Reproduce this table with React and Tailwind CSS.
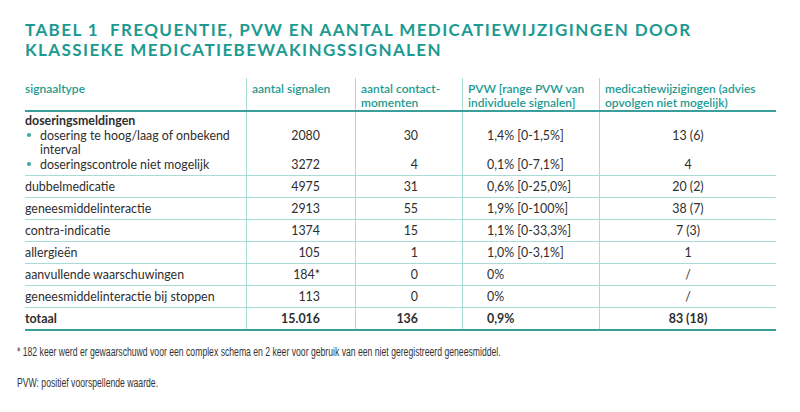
import React from "react";

const cols = "grid grid-cols-[221px_109px_107px_137px_177px]";

const rows = [
  ["dubbelmedicatie", "4975", "31", "0,6% [0-25,0%]", "20 (2)"],
  ["geneesmiddelinteractie", "2913", "55", "1,9% [0-100%]", "38 (7)"],
  ["contra-indicatie", "1374", "15", "1,1% [0-33,3%]", "7 (3)"],
  ["allergieën", "105", "1", "1,0% [0-3,1%]", "1"],
  ["aanvullende waarschuwingen", "184*", "0", "0%", "/"],
  ["geneesmiddelinteractie bij stoppen", "113", "0", "0%", "/"],
];

const Bullet = () => (
  <span className="inline-block w-[4px] h-[4px] rounded-full bg-[#3aa9a2] ml-[2px] mr-[9px] mb-[2px] align-middle" />
);

export default function App() {
  return (
    <div className="w-[800px] h-[412px] bg-white text-[#2e2e2e] font-['Lato',sans-serif] overflow-hidden">
      {/* Title */}
      <div className="pl-[25px] pt-[20px] text-[#1c9a91] text-[17px] leading-[20px] font-bold tracking-[1.4px]">
        <div>TABEL 1&nbsp; FREQUENTIE, PVW EN AANTAL MEDICATIEWIJZIGINGEN DOOR</div>
        <div>KLASSIEKE MEDICATIEBEWAKINGSSIGNALEN</div>
      </div>

      {/* Table */}
      <div className="ml-[25px] mt-[18px] w-[751px] text-[12.4px]">
        {/* Header */}
        <div className={`${cols} h-[34px] border-b-2 border-[#3a9f9a] text-[#1c9a91] font-semibold leading-[14px] text-[12px]`}>
          <div className="pt-[4px]">signaaltype</div>
          <div className="pt-[4px] pl-[5px] border-l border-[#a9dbd7]">aantal signalen</div>
          <div className="pt-[4px] pl-[5px] border-l border-[#a9dbd7]">aantal contact-<br />momenten</div>
          <div className="pt-[4px] pl-[5px] border-l border-[#a9dbd7]">PVW [range PVW van<br />individuele signalen]</div>
          <div className="pt-[4px] pl-[5px] border-l border-[#a9dbd7]">medicatiewijzigingen (advies<br />opvolgen niet mogelijk)</div>
        </div>

        {/* Doseringsmeldingen group */}
        <div className={`${cols} h-[64px] border-b border-[#a9dbd7] leading-[14.5px]`}>
          <div className="pt-[2px]">
            <div className="font-bold">doseringsmeldingen</div>
            <div><Bullet />dosering te hoog/laag of onbekend</div>
            <div className="pl-[15px]">interval</div>
            <div><Bullet />doseringscontrole niet mogelijk</div>
          </div>
          <div className="pt-[2px] pr-[35px] text-right border-l border-[#a9dbd7]">
            <div>&nbsp;</div><div>2080</div><div>&nbsp;</div><div>3272</div>
          </div>
          <div className="pt-[2px] pr-[44px] text-right border-l border-[#a9dbd7]">
            <div>&nbsp;</div><div>30</div><div>&nbsp;</div><div>4</div>
          </div>
          <div className="pt-[2px] pl-[24px] border-l border-[#a9dbd7]">
            <div>&nbsp;</div><div>1,4% [0-1,5%]</div><div>&nbsp;</div><div>0,1% [0-7,1%]</div>
          </div>
          <div className="pt-[2px] text-center border-l border-[#a9dbd7]">
            <div>&nbsp;</div><div>13 (6)</div><div>&nbsp;</div><div>4</div>
          </div>
        </div>

        {rows.map((r) => (
          <div key={r[0]} className={`${cols} h-[22px] border-b border-[#a9dbd7] leading-[21px]`}>
            <div>{r[0]}</div>
            <div className="pr-[35px] text-right border-l border-[#a9dbd7]">{r[1]}</div>
            <div className="pr-[44px] text-right border-l border-[#a9dbd7]">{r[2]}</div>
            <div className="pl-[24px] border-l border-[#a9dbd7]">{r[3]}</div>
            <div className="text-center border-l border-[#a9dbd7]">{r[4]}</div>
          </div>
        ))}

        {/* Totaal */}
        <div className={`${cols} h-[23px] border-b-2 border-[#3a9f9a] leading-[21px] font-bold`}>
          <div>totaal</div>
          <div className="pr-[35px] text-right border-l border-[#a9dbd7]">15.016</div>
          <div className="pr-[44px] text-right border-l border-[#a9dbd7]">136</div>
          <div className="pl-[24px] border-l border-[#a9dbd7]">0,9%</div>
          <div className="text-center border-l border-[#a9dbd7]">83 (18)</div>
        </div>
      </div>

      {/* Footnotes (condensed face) */}
      <div className="pl-[17px] pt-[14px] text-[12px] leading-[14px] text-[#333] font-['Liberation_Sans',sans-serif]">
        <p className="w-max origin-left scale-x-[0.72]">
          * 182 keer werd er gewaarschuwd voor een complex schema en 2 keer voor gebruik van een niet geregistreerd geneesmiddel.
        </p>
        <p className="w-max origin-left scale-x-[0.72] mt-[17px]">PVW: positief voorspellende waarde.</p>
      </div>
    </div>
  );
}
